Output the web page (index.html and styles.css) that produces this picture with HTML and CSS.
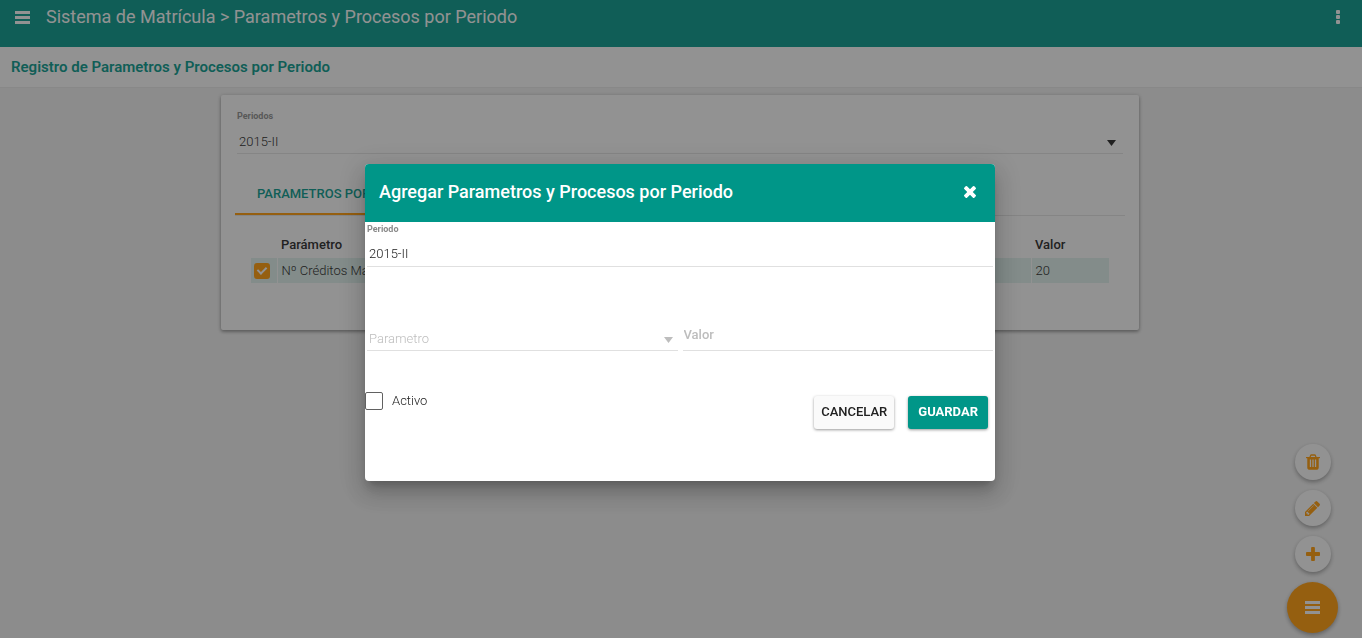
FILE: index.html
```html
<!DOCTYPE html>
<html lang="es">
<head>
<meta charset="utf-8">
<title>Sistema de Matrícula</title>
<link rel="stylesheet" href="styles.css">
</head>
<body>
<header class="topbar">
  <button class="icon-btn" type="button" aria-label="Menú">
    <svg width="15" height="13" viewBox="0 0 15 13"><path d="M0 0h15v3H0zM0 5h15v3H0zM0 10h15v3H0z"/></svg>
  </button>
  <h1 class="topbar-title">Sistema de Matrícula &gt; Parametros y Procesos por Periodo</h1>
  <button class="icon-btn" type="button" aria-label="Opciones">
    <svg width="4" height="14" viewBox="0 0 4 14"><rect width="4" height="4" rx="1"/><rect y="5" width="4" height="4" rx="1"/><rect y="10" width="4" height="4" rx="1"/></svg>
  </button>
</header>
<div class="subbar"><h2 class="subbar-title">Registro de Parametros y Procesos por Periodo</h2></div>

<div class="content">
<main class="card">
  <div class="field card-field">
    <label class="field-label" for="periodos">Periodos</label>
    <div class="select-wrap">
      <select class="control select" id="periodos"><option>2015-II</option></select>
      <svg class="arrow" width="9" height="6" viewBox="0 0 9 6"><path d="M0 0h9L4.500 6z"/></svg>
    </div>
  </div>
  <nav class="tabs"><button class="tab" type="button">PARAMETROS POR PERIODO</button></nav>
  <table class="grid">
    <thead><tr><th class="col-check"></th><th>Parámetro</th><th class="col-value">Valor</th></tr></thead>
    <tbody>
      <tr>
        <td class="col-check"><input class="check check-on" type="checkbox" checked aria-label="Seleccionar Nº Créditos Maximo"></td>
        <td>Nº Créditos Maximo</td>
        <td class="col-value">20</td>
      </tr>
    </tbody>
  </table>
</main>
</div>

<div class="fabs">
  <button class="fab" type="button" aria-label="Eliminar">
    <svg width="14" height="16" viewBox="0 0 1408 1536"><path d="M512 1248V544q0-14-9-23t-23-9h-64q-14 0-23 9t-9 23v704q0 14 9 23t23 9h64q14 0 23-9t9-23zm256 0V544q0-14-9-23t-23-9h-64q-14 0-23 9t-9 23v704q0 14 9 23t23 9h64q14 0 23-9t9-23zm256 0V544q0-14-9-23t-23-9h-64q-14 0-23 9t-9 23v704q0 14 9 23t23 9h64q14 0 23-9t9-23zM480 256h448l-48-117q-7-9-17-11H546q-10 2-17 11zm928 32v64q0 14-9 23t-23 9h-96v948q0 83-47 143.500t-113 60.500H288q-66 0-113-58.500T128 1336V384H32q-14 0-23-9t-9-23v-64q0-14 9-23t23-9h309l70-167q15-37 54-63t79-26h320q40 0 79 26t54 63l70 167h309q14 0 23 9t9 23z"/></svg>
  </button>
  <button class="fab" type="button" aria-label="Editar">
    <svg width="15" height="15" viewBox="0 0 1515 1515"><path d="M363 1387l91-91-235-235-91 91v107h128v128h107zM886 459q0-22-22-22-10 0-17 7l-542 542q-7 7-7 17 0 22 22 22 10 0 17-7l542-542q7-7 7-17zM832 267l416 416-832 832H0v-416zM1515 363q0 53-37 90l-166 166-416-416 166-165q36-38 90-38 53 0 91 38l235 234q37 39 37 91z"/></svg>
  </button>
  <button class="fab" type="button" aria-label="Agregar">
    <svg width="14" height="14" viewBox="0 0 1408 1408"><path d="M1408 608v192q0 40-28 68t-68 28H896v416q0 40-28 68t-68 28H608q-40 0-68-28t-28-68V896H96q-40 0-68-28T0 800V608q0-40 28-68t68-28h416V96q0-40 28-68t68-28h192q40 0 68 28t28 68v416h416q40 0 68 28t28 68z"/></svg>
  </button>
  <button class="fab fab-main" type="button" aria-label="Acciones">
    <svg width="15" height="13" viewBox="0 0 15 13"><path d="M0 0h15v3H0zM0 5h15v3H0zM0 10h15v3H0z"/></svg>
  </button>
</div>

<div class="backdrop">
  <form class="dialog" role="dialog" aria-labelledby="dialog-title">
    <div class="dialog-head">
      <h2 class="dialog-title" id="dialog-title">Agregar Parametros y Procesos por Periodo</h2>
      <button class="icon-btn" type="button" aria-label="Cerrar">
        <svg width="12" height="12" viewBox="0 0 1188 1188"><path d="M1188 956q0 40-28 68l-136 136q-28 28-68 28t-68-28L594 866l-294 294q-28 28-68 28t-68-28L28 1024q-28-28-28-68t28-68l294-294L28 300Q0 272 0 232t28-68L164 28q28-28 68-28t68 28l294 294L888 28q28-28 68-28t68 28l136 136q28 28 28 68t-28 68L866 594l294 294q28 28 28 68z"/></svg>
      </button>
    </div>
    <div class="field dialog-field">
      <label class="field-label" for="periodo">Periodo</label>
      <input class="control period-input" id="periodo" type="text" value="2015-II" readonly>
    </div>
    <div class="dialog-row">
      <div class="select-wrap">
        <select class="control select muted" aria-label="Parametro"><option>Parametro</option></select>
        <svg class="arrow muted-arrow" width="9" height="6" viewBox="0 0 9 6"><path d="M0 0h9L4.500 6z"/></svg>
      </div>
      <input class="control value-input" type="text" placeholder="Valor" aria-label="Valor">
    </div>
    <div class="dialog-foot">
      <label class="active"><input class="check" type="checkbox">Activo</label>
      <div class="actions">
        <button class="btn" type="button">CANCELAR</button>
        <button class="btn btn-primary" type="submit">GUARDAR</button>
      </div>
    </div>
  </form>
</div>
</body>
</html>
```
FILE: styles.css
```css
* { box-sizing: border-box; }
body {
  margin: 0;
  min-height: 100vh;
  background: #eee;
  color: #212121;
  font: 300 13px/18px Roboto, "Liberation Sans", sans-serif;
}
h1, h2 { margin: 0; }
button, input, select { margin: 0; padding: 0; border: 0; font: inherit; color: inherit; }
svg { display: block; fill: currentColor; }

.icon-btn { display: grid; place-items: center; background: none; }

.topbar {
  display: flex;
  align-items: center;
  gap: 16px;
  padding: 0 22px 13px 15px;
  height: 47px;
  background: #009688;
  color: #fafafa;
}
.topbar-title { flex: 1; font-size: 18px; line-height: 24px; font-weight: 400; }

.subbar {
  padding: 10px 11px;
  height: 40px;
  background: #fafafa;
  box-shadow: 0 1px 1px rgba(0, 0, 0, .03);
}
.subbar-title { color: #009688; font-size: 15px; line-height: 20px; font-weight: 600; }

.content { padding-right: 2px; }
.card {
  width: 67.5%;
  margin: 8px auto;
  padding: 15px 14px 47px;
  background: #fafafa;
  border-radius: 2px;
  box-shadow: 0 1px 4px rgba(0, 0, 0, .3), 0 2px 3px rgba(0, 0, 0, .2);
}
.card-field { margin: 0 2px 20px; }

.field { display: flex; flex-direction: column; }
.field-label { color: #8a8a8a; font-size: 9px; line-height: 12px; font-weight: 700; }
.control {
  width: 100%;
  height: 32px;
  padding: 0 2px;
  appearance: none;
  background: none;
  border-bottom: 1px solid #e0e0e0;
  border-radius: 0;
  outline: 0;
  opacity: 1;
}
.select { padding-top: 9px; }
.period-input { padding-top: 6px; }
.select-wrap { display: grid; align-items: center; }
.select-wrap > * { grid-area: 1 / 1; }
.arrow { justify-self: end; margin: 10px 7px 0 0; pointer-events: none; }
.muted { color: #bdbdbd; }
.muted-arrow { margin-right: 5px; color: #bdbdbd; }

.tabs { display: flex; height: 42px; border-bottom: 1px solid #e0e0e0; }
.tab {
  padding: 0 22px;
  background: none;
  border-bottom: 2px solid #ff9800;
  color: #009688;
  font-weight: 500;
}

.grid { width: calc(100% - 32px); margin: 16px 16px 0; border-collapse: collapse; }
.grid th { height: 26px; padding: 0 4px; text-align: left; font-weight: 500; }
.grid td { height: 25px; padding: 0 4px; background: #dceeea; border-left: 1px solid #fafafa; }
.grid .col-check { width: 26px; padding: 0 3px; border-left: 0; }
.grid .col-value { width: 78px; }

.check {
  width: 18px;
  height: 18px;
  appearance: none;
  border: 1px solid #616161;
  border-radius: 2px;
  background: #fff;
}
.check-on {
  display: block;
  width: 16px;
  height: 16px;
  border: 0;
  border-radius: 3px;
  background: #ff9800;
  position: relative;
}
.check-on::after {
  content: "";
  position: absolute;
  left: 5px;
  top: 2px;
  width: 4px;
  height: 7px;
  border: solid #fafafa;
  border-width: 0 2px 2px 0;
  transform: rotate(45deg);
}

.fabs {
  position: fixed;
  right: 24px;
  bottom: 5px;
  display: flex;
  flex-direction: column;
  align-items: center;
  gap: 10px;
}
.fab {
  display: grid;
  place-items: center;
  width: 36px;
  height: 36px;
  border-radius: 50%;
  background: #fafafa;
  color: #ff9800;
  box-shadow: 0 2px 4px rgba(0, 0, 0, .35);
}
.fab-main { width: 51px; height: 51px; background: #ff9800; color: #fafafa; }

.backdrop {
  position: fixed;
  inset: 0;
  display: grid;
  place-items: center;
  padding: 7px 2px 0 0;
  background: rgba(33, 33, 33, .48);
}
.dialog {
  width: 630px;
  max-width: 80%;
  overflow: hidden;
  background: #fff;
  border-radius: 4px;
  box-shadow: 0 7px 8px -4px rgba(0, 0, 0, .2), 0 13px 19px 2px rgba(0, 0, 0, .14), 0 5px 24px 4px rgba(0, 0, 0, .12);
}
.dialog-head {
  display: flex;
  align-items: center;
  justify-content: space-between;
  height: 58px;
  padding: 0 19px 2px 14px;
  background: #009688;
  color: #fff;
}
.dialog-title { font-size: 18px; line-height: 24px; font-weight: 500; }
.dialog-field { margin: 1px 2px 0; }
.dialog-row {
  display: grid;
  grid-template-columns: 1fr 1fr;
  gap: 5px;
  margin: 52px 2px 0;
}
.value-input { padding: 0 1px; }
.value-input::placeholder { color: #bdbdbd; font-weight: 500; opacity: 1; }
.dialog-foot {
  display: flex;
  align-items: flex-start;
  justify-content: space-between;
  padding: 40px 7px 52px 0;
}
.active { display: flex; align-items: center; gap: 9px; line-height: 20px; }
.actions { display: flex; gap: 14px; padding-top: 5px; }
.btn {
  height: 33px;
  padding: 0 7px 2px;
  border-radius: 3px;
  background: #fafafa;
  font-weight: 500;
  box-shadow: 0 1px 3px rgba(0, 0, 0, .4);
}
.btn-primary { padding: 0 10px 2px; background: #009688; color: #fff; font-weight: 700; }
```
